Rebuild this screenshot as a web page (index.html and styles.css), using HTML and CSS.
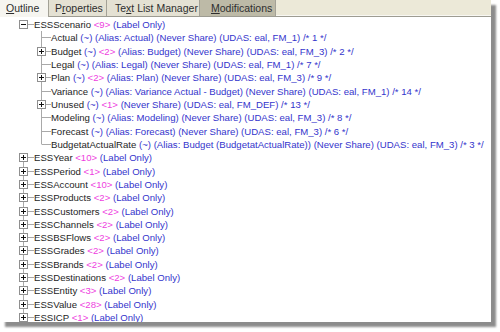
FILE: index.html
```html
<!DOCTYPE html>
<html>
<head>
<meta charset="utf-8">
<link rel="stylesheet" href="styles.css">
</head>
<body>
<div class="win">
  <div class="tabs">
    <div class="tab sel t1"><span class="u">O</span>utline</div>
    <div class="tab t2">P<span class="u">r</span>operties</div>
    <div class="tab t3">Te<span class="u">x</span>t List Manager</div>
    <div class="tab dark t4"><span class="u">M</span>odifications</div>
  </div>
  <div class="tree">
    <div class="row"><span class="conn r0"><span class="box minus"></span></span><span class="txt">ESSScenario <span class="pk">&lt;9&gt;</span> <span class="bl">(Label Only)</span></span></div>

    <div class="row"><span class="conn r1 leaf vfull"></span><span class="txt">Actual <span class="bl">(~) (Alias: Actual) (Never Share) (UDAS: eal, FM_1) /* 1 */</span></span></div>
    <div class="row"><span class="conn r1 vfull"><span class="box plus"></span></span><span class="txt">Budget <span class="bl">(~)</span> <span class="pk">&lt;2&gt;</span> <span class="bl">(Alias: Budget) (Never Share) (UDAS: eal, FM_3) /* 2 */</span></span></div>
    <div class="row"><span class="conn r1 leaf vfull"></span><span class="txt">Legal <span class="bl">(~) (Alias: Legal) (Never Share) (UDAS: eal, FM_1) /* 7 */</span></span></div>
    <div class="row"><span class="conn r1 vfull"><span class="box plus"></span></span><span class="txt">Plan <span class="bl">(~)</span> <span class="pk">&lt;2&gt;</span> <span class="bl">(Alias: Plan) (Never Share) (UDAS: eal, FM_3) /* 9 */</span></span></div>
    <div class="row"><span class="conn r1 leaf vfull"></span><span class="txt">Variance <span class="bl">(~) (Alias: Variance Actual - Budget) (Never Share) (UDAS: eal, FM_1) /* 14 */</span></span></div>
    <div class="row"><span class="conn r1 vfull"><span class="box plus"></span></span><span class="txt">Unused <span class="bl">(~)</span> <span class="pk">&lt;1&gt;</span> <span class="bl">(Never Share) (UDAS: eal, FM_DEF) /* 13 */</span></span></div>
    <div class="row"><span class="conn r1 leaf vfull"></span><span class="txt">Modeling <span class="bl">(~) (Alias: Modeling) (Never Share) (UDAS: eal, FM_3) /* 8 */</span></span></div>
    <div class="row"><span class="conn r1 leaf vfull"></span><span class="txt">Forecast <span class="bl">(~) (Alias: Forecast) (Never Share) (UDAS: eal, FM_3) /* 6 */</span></span></div>
    <div class="row"><span class="conn r1 leaf vtop"></span><span class="txt">BudgetatActualRate <span class="bl">(~) (Alias: Budget (BudgetatActualRate)) (Never Share) (UDAS: eal, FM_3) /* 3 */</span></span></div>

    <div class="row"><span class="conn r0 vbot"><span class="box plus"></span></span><span class="txt">ESSYear <span class="pk">&lt;10&gt;</span> <span class="bl">(Label Only)</span></span></div>
    <div class="row"><span class="conn r0 vfull"><span class="box plus"></span></span><span class="txt">ESSPeriod <span class="pk">&lt;1&gt;</span> <span class="bl">(Label Only)</span></span></div>
    <div class="row"><span class="conn r0 vfull"><span class="box plus"></span></span><span class="txt">ESSAccount <span class="pk">&lt;10&gt;</span> <span class="bl">(Label Only)</span></span></div>
    <div class="row"><span class="conn r0 vfull"><span class="box plus"></span></span><span class="txt">ESSProducts <span class="pk">&lt;2&gt;</span> <span class="bl">(Label Only)</span></span></div>
    <div class="row"><span class="conn r0 vfull"><span class="box plus"></span></span><span class="txt">ESSCustomers <span class="pk">&lt;2&gt;</span> <span class="bl">(Label Only)</span></span></div>
    <div class="row"><span class="conn r0 vfull"><span class="box plus"></span></span><span class="txt">ESSChannels <span class="pk">&lt;2&gt;</span> <span class="bl">(Label Only)</span></span></div>
    <div class="row"><span class="conn r0 vfull"><span class="box plus"></span></span><span class="txt">ESSBSFlows <span class="pk">&lt;2&gt;</span> <span class="bl">(Label Only)</span></span></div>
    <div class="row"><span class="conn r0 vfull"><span class="box plus"></span></span><span class="txt">ESSGrades <span class="pk">&lt;2&gt;</span> <span class="bl">(Label Only)</span></span></div>
    <div class="row"><span class="conn r0 vfull"><span class="box plus"></span></span><span class="txt">ESSBrands <span class="pk">&lt;2&gt;</span> <span class="bl">(Label Only)</span></span></div>
    <div class="row"><span class="conn r0 vfull"><span class="box plus"></span></span><span class="txt">ESSDestinations <span class="pk">&lt;2&gt;</span> <span class="bl">(Label Only)</span></span></div>
    <div class="row"><span class="conn r0 vfull"><span class="box plus"></span></span><span class="txt">ESSEntity <span class="pk">&lt;3&gt;</span> <span class="bl">(Label Only)</span></span></div>
    <div class="row"><span class="conn r0 vfull"><span class="box plus"></span></span><span class="txt">ESSValue <span class="pk">&lt;28&gt;</span> <span class="bl">(Label Only)</span></span></div>
    <div class="row"><span class="conn r0 vtop"><span class="box plus"></span></span><span class="txt">ESSICP <span class="pk">&lt;1&gt;</span> <span class="bl">(Label Only)</span></span></div>
  </div>
</div>
</body>
</html>
```
FILE: styles.css
```css
html, body {
  margin: 0;
  padding: 0;
  background: #fff;
}
body {
  width: 500px;
  height: 332px;
  overflow: hidden;
  font-family: "Liberation Sans", Arial, sans-serif;
}
.win {
  width: 491px;
  height: 322px;
  background: #fff;
  box-shadow: 5px 5px 2px rgba(0, 0, 0, 0.45);
  overflow: hidden;
}
.tabs {
  display: flex;
  height: 16px;
  background: #ECE9D8;
  border-bottom: 1px solid #9d9c92;
  box-shadow: inset 0 -1px 0 #f8f7f2;
}
.tab {
  box-sizing: border-box;
  height: 16px;
  font-size: 10.5px;
  line-height: 16px;
  color: #2e2e2e;
  background: #E4E1D3;
  border-right: 1px solid #a3a196;
  white-space: nowrap;
}
.tab .u { text-decoration: underline; }
.tab.sel { background: #F6F5F0; height: 17px; }
.tab.dark { background: #BDBAA7; }
.t1 { width: 49px; padding-left: 6px; }
.t2 { width: 58px; padding-left: 6px; }
.t3 { width: 93px; padding-left: 8px; }
.t4 { width: 76px; padding-left: 11px; }

.tree {
  padding-top: 1px;
  font-size: 9.6px;
}
.row {
  display: flex;
  align-items: center;
  height: 13.32px;
  color: #1e1e1e;
}
.txt {
  white-space: pre;
  color: #1e1e1e;
}
.pk { color: #ee3ee0; }
.bl { color: #3434cc; }

.conn {
  --lc: #a9a9a9;
  align-self: stretch;
  display: flex;
  align-items: center;
  flex: none;
  box-sizing: border-box;
  background-image: linear-gradient(var(--lc), var(--lc)), linear-gradient(var(--lc), var(--lc));
  background-repeat: no-repeat;
  background-size: 1px var(--vh, 0px), var(--hw) 1px;
  background-position: var(--vx) var(--vy, 0px), var(--hx) 50%;
}
.r0 {
  width: 34px;
  padding-left: 19px;
  --vx: 23px;
  --hx: 28px;
  --hw: 6px;
}
.r1 {
  width: 51px;
  padding-left: 37px;
  --vx: 41px;
  --hx: 46px;
  --hw: 5px;
}
.r1.leaf { --hx: 42px; --hw: 9px; }
.vfull { --vh: 100%; --vy: 0px; }
.vtop { --vh: 50%; --vy: 0px; }
.vbot { --vh: 50%; --vy: 100%; }

.box {
  width: 9px;
  height: 9px;
  box-sizing: border-box;
  border: 1px solid #8f8f8f;
  background-color: #fff;
  background-repeat: no-repeat;
  background-position: center;
}
.minus {
  background-image: linear-gradient(#111, #111);
  background-size: 5px 1px;
}
.plus {
  background-image: linear-gradient(#111, #111), linear-gradient(#111, #111);
  background-size: 5px 1px, 1px 5px;
}
```
